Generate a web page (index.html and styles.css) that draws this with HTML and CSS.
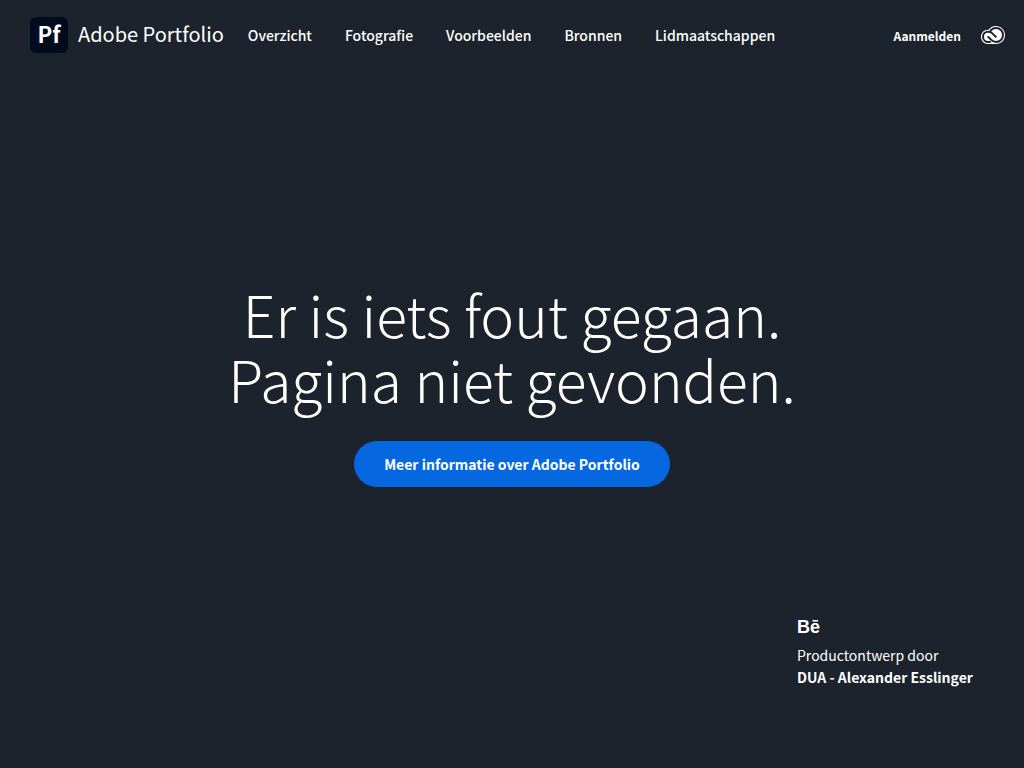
FILE: index.html
```html
<!DOCTYPE html>
<html lang="nl">
  <head>
    <meta charset="utf-8">
    <title>Adobe Portfolio</title>
    <meta name="viewport" content="width=device-width, initial-scale=1.0">
    <link rel="stylesheet" href="styles.css">
  </head>

  <body>
    <header class="header">
      <a class="brand" href="#">
        <span class="brand-tile">Pf</span>
        <span class="brand-name">Adobe Portfolio</span>
      </a>
      <nav class="nav">
        <a href="#">Overzicht</a>
        <a href="#">Fotografie</a>
        <a href="#">Voorbeelden</a>
        <a href="#">Bronnen</a>
        <a href="#">Lidmaatschappen</a>
      </nav>
      <div class="account">
        <a class="sign-in" href="#">Aanmelden</a>
        <a class="cc-link" href="#" aria-label="Creative Cloud">
          <svg class="cc-icon" viewBox="0 0 72 54">
            <path class="cc-cloud" d="M45 0C34 0 27 5 23 11C9 10 0 20 0 32C0 45 9 54 22 54H45C61 54 72 42 72 27C72 12 60 0 45 0Z"/>
            <path class="cc-line" d="M27 17C31 10 37 6 45 6C57 6 66 15 66 27C66 39 57 48 45 48C38 48 34 45 30 41L20 31"/>
            <path class="cc-line" d="M30 47C28 48 25 48 22 48C13 48 6 41 6 32C6 23 13 17 21 17C27 17 31 19 34 22L46 34"/>
          </svg>
        </a>
      </div>
    </header>

    <main class="main">
      <h1>Er is iets fout gegaan.<br>Pagina niet gevonden.</h1>
      <a class="btn" href="#">Meer informatie over Adobe Portfolio</a>
    </main>

    <footer class="credit">
      <a class="behance" href="#">Bē</a>
      <p>Productontwerp door</p>
      <a class="credit-name" href="#">DUA - Alexander Esslinger</a>
    </footer>
  </body>
</html>
```
FILE: styles.css
```css
* {
  box-sizing: border-box;
  margin: 0;
}

body {
  display: flex;
  flex-direction: column;
  min-height: 100vh;
  background-color: #1c232c;
  color: white;
  font-family: "Noto Sans CJK SC", "Open Sans", sans-serif;
}

a {
  color: inherit;
  text-decoration: none;
}

/* header */
.header {
  display: flex;
  align-items: center;
  height: 70px;
  padding: 0 19px 0 30px;
}

.brand {
  display: flex;
  align-items: flex-start;
  gap: 10px;
}

.brand-tile {
  width: 38px;
  height: 36px;
  border-radius: 6px;
  background-color: #000b1d;
  font-size: 22px;
  font-weight: bold;
  line-height: 32px;
  text-align: center;
}

.brand-name {
  font-size: 20px;
  font-weight: 400;
  line-height: 34px;
}

.nav {
  display: flex;
  gap: 33px;
  margin-left: 24px;
  font-size: 14px;
  font-weight: 500;
}

.account {
  display: flex;
  align-items: center;
  gap: 20px;
  margin-left: auto;
}

.sign-in {
  font-size: 12px;
  font-weight: bold;
}

.cc-icon {
  display: block;
  width: 24px;
  height: 18px;
}

.cc-cloud {
  fill: white;
}

.cc-line {
  fill: none;
  stroke: #1c232c;
  stroke-width: 6;
}

/* message */
.main {
  display: flex;
  flex: 1;
  flex-direction: column;
  align-items: center;
  justify-content: center;
  gap: 30px;
  padding-top: 82px;
  text-align: center;
}

h1 {
  font-size: 57px;
  font-weight: 300;
  line-height: 65px;
}

.btn {
  padding: 0 30px;
  border-radius: 23px;
  background-color: #0668e1;
  font-size: 14px;
  font-weight: bold;
  line-height: 46px;
}

/* credit */
.credit {
  align-self: flex-end;
  width: 227px;
  padding-bottom: 80px;
  font-size: 14px;
  line-height: 22px;
}

.behance {
  display: block;
  margin-bottom: 6px;
  font-family: "Liberation Sans", sans-serif;
  font-size: 18px;
  font-weight: bold;
}

.credit-name {
  font-weight: bold;
}
```
